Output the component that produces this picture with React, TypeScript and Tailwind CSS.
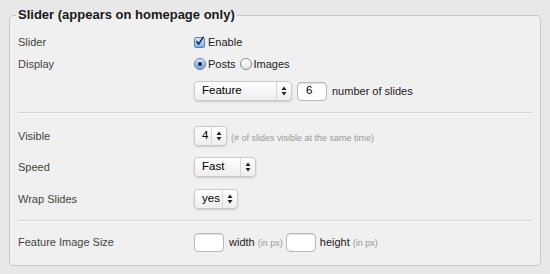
import React from "react"

const font = { fontFamily: '"Liberation Sans", Arial, sans-serif' }

function Arrows() {
  return (
    <svg width="6" height="10" viewBox="0 0 6 10">
      <path d="M3 0.5L5.5 4H0.5Z" fill="#222" />
      <path d="M3 9.5L0.5 6H5.5Z" fill="#222" />
    </svg>
  )
}

function Select({ value, width }: { value: string; width: string }) {
  return (
    <div
      className={`${width} h-[20px] flex items-stretch rounded-[4px] border border-[#cacaca] bg-gradient-to-b from-white to-[#eeeeee] shadow-[0_1px_2px_rgba(0,0,0,0.16)]`}
    >
      <div className="flex-1 flex items-center pl-[7px] text-[11.5px] text-black">{value}</div>
      <div className="w-[15px] flex items-center justify-center border-l border-[#d6d6d6]">
        <Arrows />
      </div>
    </div>
  )
}

function TextInput({ value }: { value?: string }) {
  return (
    <div className="w-[30px] h-[19px] flex items-center pl-[8px] text-[11.5px] text-black bg-white border border-[#b9b9b9] rounded-[4px] shadow-[inset_0_1px_1px_rgba(0,0,0,0.12)]">
      {value}
    </div>
  )
}

function Label({ children }: { children: React.ReactNode }) {
  return <div className="w-[176px] text-[11px] text-[#444]">{children}</div>
}

function Hint({ children }: { children: React.ReactNode }) {
  return <span className="text-[9px] text-[#999]">{children}</span>
}

export default function App() {
  return (
    <div className="w-[550px] h-[274px] bg-[#e8e8e8] pt-[7px] px-[9px]" style={font}>
      <fieldset className="h-[259px] border border-[#c6c6c6] rounded-[4px] bg-[#f0f0f0] pl-[6px] pr-[8px]">
        <legend className="px-[2px] text-[13px] leading-[16px] font-bold text-[#1a1a1a]">
          Slider (appears on homepage only)
        </legend>

        <div className="pl-[2px] pt-[9px]">
          <div className="flex items-center h-5">
            <Label>Slider</Label>
            <div className="flex items-center gap-[3px]">
              <span className="w-[11px] h-[11px] rounded-[2px] border border-[#5a7fb5] bg-gradient-to-b from-[#d8e8fb] to-[#7fb0e8] flex items-center justify-center">
                <svg width="11" height="11" viewBox="0 0 11 11" className="-mt-[2px]">
                  <path d="M2 5.5L4.5 8.5L10 0.5" stroke="#14213a" strokeWidth="1.8" fill="none" strokeLinecap="round" />
                </svg>
              </span>
              <span className="text-[11px] text-[#222]">Enable</span>
            </div>
          </div>

          <div className="flex items-center h-5 mt-[2px]">
            <Label>Display</Label>
            <div className="flex items-center text-[11px] text-[#222]">
              <span className="w-[12px] h-[12px] rounded-full border border-[#5a7fb5] bg-gradient-to-b from-[#d8e8fb] to-[#6fa4e4] flex items-center justify-center">
                <span className="w-[4px] h-[4px] rounded-full bg-[#14213a]" />
              </span>
              <span className="ml-[2px]">Posts</span>
              <span className="ml-[4px] w-[12px] h-[12px] rounded-full border border-[#8a8a8a] bg-gradient-to-b from-white to-[#e4e4e4]" />
              <span className="ml-[2px]">Images</span>
            </div>
          </div>

          <div className="flex items-center h-[22px] mt-[6px]">
            <div className="w-[176px]" />
            <Select value="Feature" width="w-[98px]" />
            <div className="ml-[5px]">
              <TextInput value="6" />
            </div>
            <span className="ml-[5px] text-[11px] text-[#222]">number of slides</span>
          </div>

          <div className="mt-[10px] h-px bg-[#d4d4d4] shadow-[0_1px_0_#fafafa]" />

          <div className="flex items-center h-[22px] mt-[12px]">
            <Label>Visible</Label>
            <Select value="4" width="w-[33px]" />
            <span className="ml-[4px]">
              <Hint>(# of slides visible at the same time)</Hint>
            </span>
          </div>

          <div className="flex items-center h-[22px] mt-[9px]">
            <Label>Speed</Label>
            <Select value="Fast" width="w-[62px]" />
          </div>

          <div className="flex items-center h-[22px] mt-[10px]">
            <Label>Wrap Slides</Label>
            <Select value="yes" width="w-[44px]" />
          </div>

          <div className="mt-[10px] h-px bg-[#d4d4d4] shadow-[0_1px_0_#fafafa]" />

          <div className="flex items-center h-[22px] mt-[10px]">
            <Label>Feature Image Size</Label>
            <TextInput />
            <span className="ml-[5px] text-[11px] text-[#222]">
              width <Hint>(in px)</Hint>
            </span>
            <span className="ml-[3px]">
              <TextInput />
            </span>
            <span className="ml-[4px] text-[11px] text-[#222]">
              height <Hint>(in px)</Hint>
            </span>
          </div>
        </div>
      </fieldset>
    </div>
  )
}
